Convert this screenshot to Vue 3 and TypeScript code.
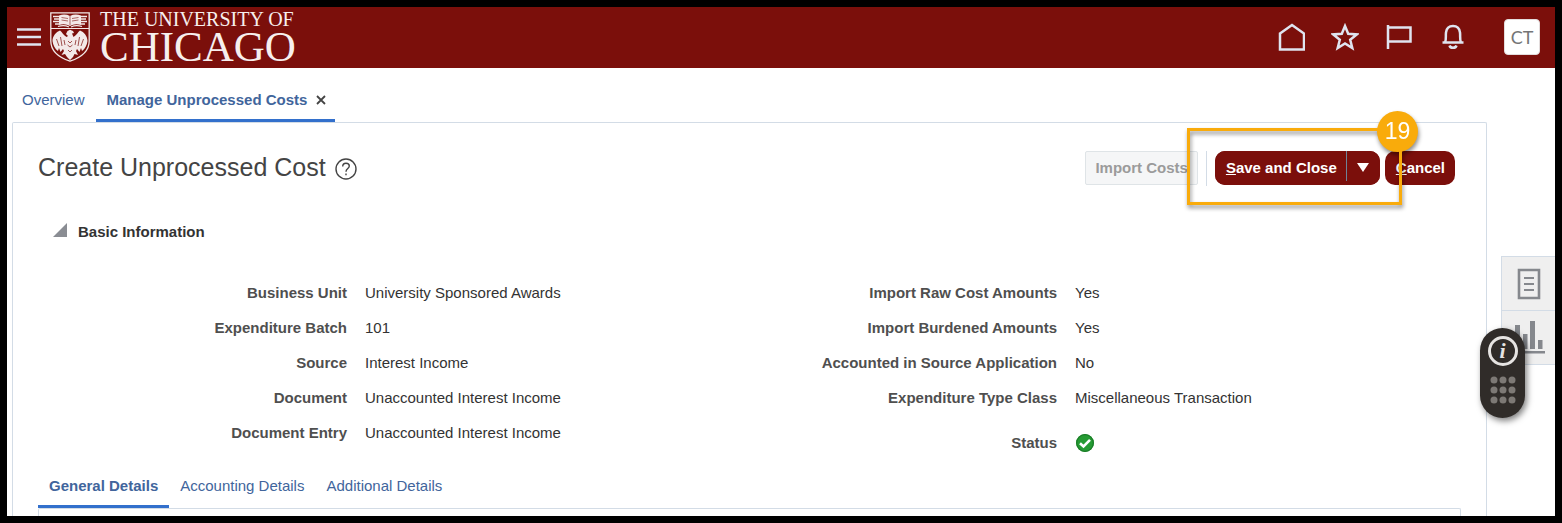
<script setup lang="ts">
import { ref } from 'vue'

interface Field {
  label: string
  value?: string
  ok?: boolean
}

const leftFields: Field[] = [
  { label: 'Business Unit', value: 'University Sponsored Awards' },
  { label: 'Expenditure Batch', value: '101' },
  { label: 'Source', value: 'Interest Income' },
  { label: 'Document', value: 'Unaccounted Interest Income' },
  { label: 'Document Entry', value: 'Unaccounted Interest Income' },
]
const rightFields: Field[] = [
  { label: 'Import Raw Cost Amounts', value: 'Yes' },
  { label: 'Import Burdened Amounts', value: 'Yes' },
  { label: 'Accounted in Source Application', value: 'No' },
  { label: 'Expenditure Type Class', value: 'Miscellaneous Transaction' },
  { label: 'Status', ok: true },
]
const columns = [leftFields, rightFields]

const detailTabs = ['General Details', 'Accounting Details', 'Additional Details']
const activeDetail = ref(0)
const expanded = ref(true)
</script>

<template>
  <div class="app">
    <header class="bar">
      <button class="icon-btn menu" aria-label="Navigator">
        <svg width="24" height="18" viewBox="0 0 24 18"><path d="M0 1.5H24M0 9H24M0 16.5H24" stroke="#dfe4f0" stroke-width="2.6" /></svg>
      </button>
      <a class="brand" href="#">
        <svg class="shield" width="40" height="50" viewBox="0 0 40 50">
          <path d="M.8.8H39.2V29C39.2 39 31 45.500 20 49.200C9 45.500.8 39 .8 29Z" fill="#7b0f0b" stroke="#f3e9e8" stroke-width="1.300" />
          <path d="M1 16.500H39" stroke="#f3e9e8" stroke-width="1.200" />
          <path d="M9 3.500Q15 1.500 20 4Q25 1.500 31 3.500V13Q25 11 20 14Q15 11 9 13Z" fill="#f3e9e8" />
          <path d="M11.500 5.500L18 6.500M11.500 8L18 9M22 6.500L28.500 5.500M22 9L28.500 8M20 4V13" stroke="#7b0f0b" stroke-width=".6" />
          <path d="M3 4.500H9M4 7H9M3 9.500H9M5 12H9M31 4.500H37M31 7H36M31 9.500H37M31 12H35M8 14.500Q14 12.500 19 15M21 15Q26 12.500 32 14.500" fill="none" stroke="#f3e9e8" stroke-width="1.300" />
          <path d="M18 24L16 22L17.500 19L20 17.800L23 19L24 21L22 21.500L23.500 25C27 23 28 20 30 18.500C34 20 37.500 24 37.500 29C37 33 35 37 32 39L31 36L29.500 40L27 37L26 39L28 43L24.500 42L23 45L20 48L17 45L15 42L11.500 43L14 39L13 37L10.500 40L9 36L8 39C5 37 3 33 2.500 29C2.500 24 6 20 10 18.500C12 20 13 23 16.500 25Z" fill="#f3e9e8" />
          <path d="M6.500 27L9 34M10.500 25L12 34M14 28L15 33M33.500 27L31 34M29.500 25L28 34M26 28L25 33M18 29L20 31L22 29M17.500 33L20 35L22.500 33M18 38L20 40L22 38" fill="none" stroke="#7b0f0b" stroke-width=".7" />
        </svg>
        <span class="brand-text">
          <span class="brand-top">THE UNIVERSITY OF</span>
          <span class="brand-main">CHICAGO</span>
        </span>
      </a>
      <nav class="tools" aria-label="Global tools">
        <button class="icon-btn" aria-label="Home">
          <svg width="28" height="28" viewBox="0 0 28 28"><path d="M3 10.500L15 2L27 10.500V26.500H3Z" /></svg>
        </button>
        <button class="icon-btn" aria-label="Favorites">
          <svg width="28" height="28" viewBox="0 0 28 28"><path d="M14 3L17.200 10.700L25.800 11.400L19.200 16.800L21.300 25L14 20.500L6.700 25L8.800 16.800L2.200 11.400L10.800 10.700Z" /></svg>
        </button>
        <button class="icon-btn" aria-label="Watchlist">
          <svg width="28" height="28" viewBox="0 0 28 28"><path d="M3 2V26M3 4.500H25.500V18.500H3" /></svg>
        </button>
        <button class="icon-btn" aria-label="Notifications">
          <svg width="28" height="28" viewBox="0 0 28 28"><path d="M3.500 19.500H24.500M6 19.500C7.500 16.500 6.500 13 7 9.500C7.500 5.500 10 3 14 3C18 3 20.500 5.500 21 9.500C21.500 13 20.500 16.500 22 19.500M10.500 22.500C11.500 25.600 16.500 25.600 17.500 22.500" /></svg>
        </button>
      </nav>
      <button class="avatar" aria-label="Settings and actions">CT</button>
    </header>

    <div class="workspace">
      <nav class="page-tabs" aria-label="Open pages">
        <a class="tab" href="#">Overview</a>
        <div class="tab active">
          <a href="#" aria-current="page">Manage Unprocessed Costs</a>
          <button class="icon-btn close" aria-label="Close tab">
            <svg width="10" height="10" viewBox="0 0 10 10"><path d="M1 1L9 9M9 1L1 9" stroke="#444" stroke-width="1.800" /></svg>
          </button>
        </div>
      </nav>

      <main class="panel">
        <div class="head">
          <h1>Create Unprocessed Cost</h1>
          <button class="icon-btn help" aria-label="Help">
            <svg width="22" height="22" viewBox="0 0 22 22" fill="none" stroke="#444" stroke-width="1.400">
              <circle cx="11" cy="11" r="10" />
              <path d="M7.700 8.500C7.700 6.300 9 5.200 11 5.200C13 5.200 14.300 6.400 14.300 8.100C14.300 10.500 11 10.700 11 13.700" />
              <path d="M11 15.600V17.200" />
            </svg>
          </button>
          <div class="actions">
            <button class="import" disabled>Import Costs</button>
            <span class="rule"></span>
            <div class="split">
              <button class="primary save"><u>S</u>ave and Close</button>
              <button class="primary more" aria-label="More save options">
                <svg width="12" height="9" viewBox="0 0 12 9"><path d="M0 0H12L6 9Z" fill="#fff" /></svg>
              </button>
            </div>
            <button class="primary cancel"><u>C</u>ancel</button>
            <div class="callout"><span class="step">19</span></div>
          </div>
        </div>

        <section>
          <h2>
            <button class="icon-btn disclose" aria-label="Toggle Basic Information" :aria-expanded="expanded" @click="expanded = !expanded">
              <svg width="14" height="14" viewBox="0 0 14 14"><path d="M0 14H14V0Z" fill="#8a8d93" /></svg>
            </button>
            Basic Information
          </h2>
          <div v-if="expanded" class="fields">
            <dl v-for="(column, i) in columns" :key="i">
              <div v-for="field in column" :key="field.label" class="field" :class="{ status: field.ok }">
                <dt>{{ field.label }}</dt>
                <dd>
                  <svg v-if="field.ok" width="20" height="20" viewBox="0 0 20 20" role="img" aria-label="Success">
                    <circle cx="10" cy="10" r="9" fill="#259b33" />
                    <circle cx="10" cy="10" r="8.300" fill="none" stroke="#1c7d29" stroke-width="1.200" />
                    <path d="M5 10.200L8.500 13.500L15 6.800" fill="none" stroke="#fff" stroke-width="2.600" />
                  </svg>
                  <template v-else>{{ field.value }}</template>
                </dd>
              </div>
            </dl>
          </div>
        </section>

        <nav class="detail-tabs" aria-label="Cost details">
          <a v-for="(name, i) in detailTabs" :key="name" class="tab" :class="{ active: i === activeDetail }" href="#" @click.prevent="activeDetail = i">{{ name }}</a>
        </nav>
        <div class="detail-body"></div>
      </main>
    </div>

    <aside class="drawer">
      <button aria-label="Worklist">
        <svg width="24" height="32" viewBox="0 0 24 32" fill="none" stroke="#85888d"><path d="M2 2H22V30H2Z" stroke-width="2.600" /><path d="M7 10H17M7 16H17M7 22H17" stroke-width="2.200" /></svg>
      </button>
      <button aria-label="Analytics">
        <svg width="32" height="34" viewBox="0 0 32 34" fill="#85888d"><path d="M0 30H32V32.500H0ZM2 4H7V28H2ZM10 13H14.500V28H10ZM17 0H22V28H17ZM25 19H29.500V28H25Z" /></svg>
      </button>
    </aside>
    <div class="pill">
      <button class="icon-btn info" aria-label="Guided help">i</button>
      <button class="icon-btn" aria-label="Show widgets">
        <svg width="26" height="28" viewBox="0 0 26 28" fill="#7d7975">
          <template v-for="y in 3" :key="y">
            <circle v-for="x in 3" :key="x" :cx="x * 9 - 5" :cy="y * 10 - 6" r="3.500" />
          </template>
        </svg>
      </button>
    </div>
  </div>
</template>

<style>
body {
  margin: 0;
}
</style>

<style scoped>
* {
  box-sizing: border-box;
}
.app {
  position: relative;
  display: flex;
  flex-direction: column;
  height: 100vh;
  overflow: hidden;
  border: 7px solid #000;
  background: #fff;
  color: #333;
  font: 15px/20px "Liberation Sans", Arial, sans-serif;
}
button {
  font: inherit;
  cursor: pointer;
}
a {
  color: inherit;
  text-decoration: none;
}
svg {
  display: block;
}
.icon-btn {
  padding: 0;
  border: 0;
  background: none;
  color: inherit;
}
.bar {
  display: flex;
  flex: none;
  align-items: center;
  height: 61px;
  padding: 0 15px 2px 10px;
  background: #7b0f0b;
}
.brand {
  display: flex;
  align-items: center;
  gap: 10px;
  margin-left: 9px;
  color: #f7efee;
  font-family: "Liberation Serif", "Times New Roman", serif;
}
.brand-text {
  display: flex;
  flex-direction: column;
  padding-top: 4px;
  white-space: nowrap;
}
.brand-top {
  font-size: 20px;
  line-height: 16px;
}
.brand-main {
  font-size: 43px;
  line-height: 40px;
}
.tools {
  display: flex;
  gap: 26px;
  margin: 0 37px 0 auto;
}
.tools svg {
  fill: none;
  stroke: #dfe4f0;
  stroke-width: 2.5;
}
.avatar {
  width: 36px;
  height: 36px;
  padding: 0;
  border: 1px solid #e3dcdc;
  border-radius: 4px;
  background: #fff;
  color: #757575;
  font-family: Lato, sans-serif;
  font-size: 18px;
}
.workspace {
  display: flex;
  flex: 1;
  flex-direction: column;
  min-height: 0;
  padding: 0 68px 0 5px;
}
.page-tabs,
.detail-tabs {
  display: flex;
  flex: none;
}
.tab {
  display: flex;
  align-items: center;
  padding: 22px 11px 9px;
  border-bottom: 3px solid transparent;
  color: #41659c;
}
.tab.active {
  border-color: #3370cc;
  font-weight: bold;
}
.page-tabs .tab:first-child {
  padding-left: 10px;
}
.page-tabs .active {
  padding-right: 9px;
}
.close {
  margin-left: 9px;
}
.panel {
  display: flex;
  flex: 1;
  flex-direction: column;
  min-height: 0;
  padding: 28px 25px 0;
  border: 1px solid #d3dce6;
  border-bottom: 0;
  border-radius: 2px 2px 0 0;
}
.head {
  display: flex;
  align-items: center;
  height: 34px;
}
h1 {
  margin: 0;
  padding-bottom: 2px;
  color: #444;
  font-size: 25px;
  font-weight: normal;
  line-height: 32px;
}
.help {
  margin-left: 9px;
  padding-top: 2px;
}
.actions {
  position: relative;
  display: flex;
  align-items: center;
  margin: 0 6px 0 auto;
  font-weight: bold;
}
.actions button {
  height: 34px;
}
.import {
  padding: 0 9px;
  border: 1px solid #dfe4e7;
  border-radius: 2px;
  background: #f5f6f7;
  color: #9b9b9b;
}
.rule {
  width: 1px;
  height: 35px;
  margin: 0 8px;
  background: #d3dce6;
}
.split {
  display: flex;
  margin-right: 5px;
  border-radius: 10px;
  background: #7b0f0b;
}
.primary {
  border: 0;
  border-radius: 10px;
  background: #7b0f0b;
  color: #fff;
}
.save {
  padding: 0 9px 0 11px;
}
.more {
  position: relative;
  padding: 0 11px;
}
.more svg {
  margin-bottom: 2px;
}
.more::before {
  position: absolute;
  top: 0;
  left: 0;
  width: 1px;
  height: 30px;
  background: #6f8396;
  content: "";
}
.cancel {
  padding: 0 10px 0 11px;
}
.callout {
  position: absolute;
  top: -23px;
  right: 53px;
  width: 215px;
  height: 77px;
  border: 3px solid #f9ab0b;
  filter: drop-shadow(1px 3px 2px rgb(0 0 0 / 45%));
  pointer-events: none;
}
.step {
  position: absolute;
  top: -20px;
  right: -19px;
  width: 41px;
  height: 41px;
  border-radius: 50%;
  background: #f9ab0b;
  color: #fff;
  font-size: 23px;
  font-weight: normal;
  line-height: 41px;
  text-align: center;
}
h2 {
  display: flex;
  align-items: center;
  gap: 11px;
  margin: 37px 0 33px;
  padding-left: 15px;
  font-size: 15px;
  line-height: 20px;
}
.disclose {
  padding-bottom: 4px;
}
.fields {
  display: grid;
  grid-template-columns: 1fr 1fr;
  padding-right: 3px;
}
dl {
  margin: 0;
}
.field {
  display: grid;
  grid-template-columns: 309fr 383fr;
  gap: 18px;
  align-items: center;
  height: 35px;
}
.field.status {
  height: 45px;
  padding-top: 10px;
}
dt {
  color: #4f4f4f;
  font-weight: bold;
  text-align: right;
}
dd {
  margin: 0;
}
.detail-tabs .tab {
  padding-top: 16px;
}
.detail-body {
  flex: 1;
  border: 1px solid #d3dce6;
  border-bottom: 0;
  border-radius: 2px 2px 0 0;
}
.drawer {
  position: absolute;
  top: 249px;
  right: 0;
  border: 1px solid #d3dce6;
  border-right: 0;
}
.drawer button {
  display: flex;
  align-items: center;
  justify-content: center;
  width: 53px;
  height: 53px;
  padding: 0;
  border: 0;
  background: #efefef;
}
.drawer button + button {
  height: 54px;
  border-top: 1px solid #d3dce6;
}
.pill {
  position: absolute;
  top: 321px;
  right: 30px;
  display: flex;
  flex-direction: column;
  align-items: center;
  gap: 10px;
  width: 45px;
  height: 90px;
  padding-top: 8px;
  border-radius: 23px;
  background: #302c29;
  box-shadow: 2px 3px 6px rgb(0 0 0 / 50%);
}
.info {
  width: 30px;
  height: 30px;
  border: 3px solid #e6e4e2;
  border-radius: 50%;
  color: #e6e4e2;
  font: italic bold 22px/22px "Liberation Serif", serif;
}
</style>
